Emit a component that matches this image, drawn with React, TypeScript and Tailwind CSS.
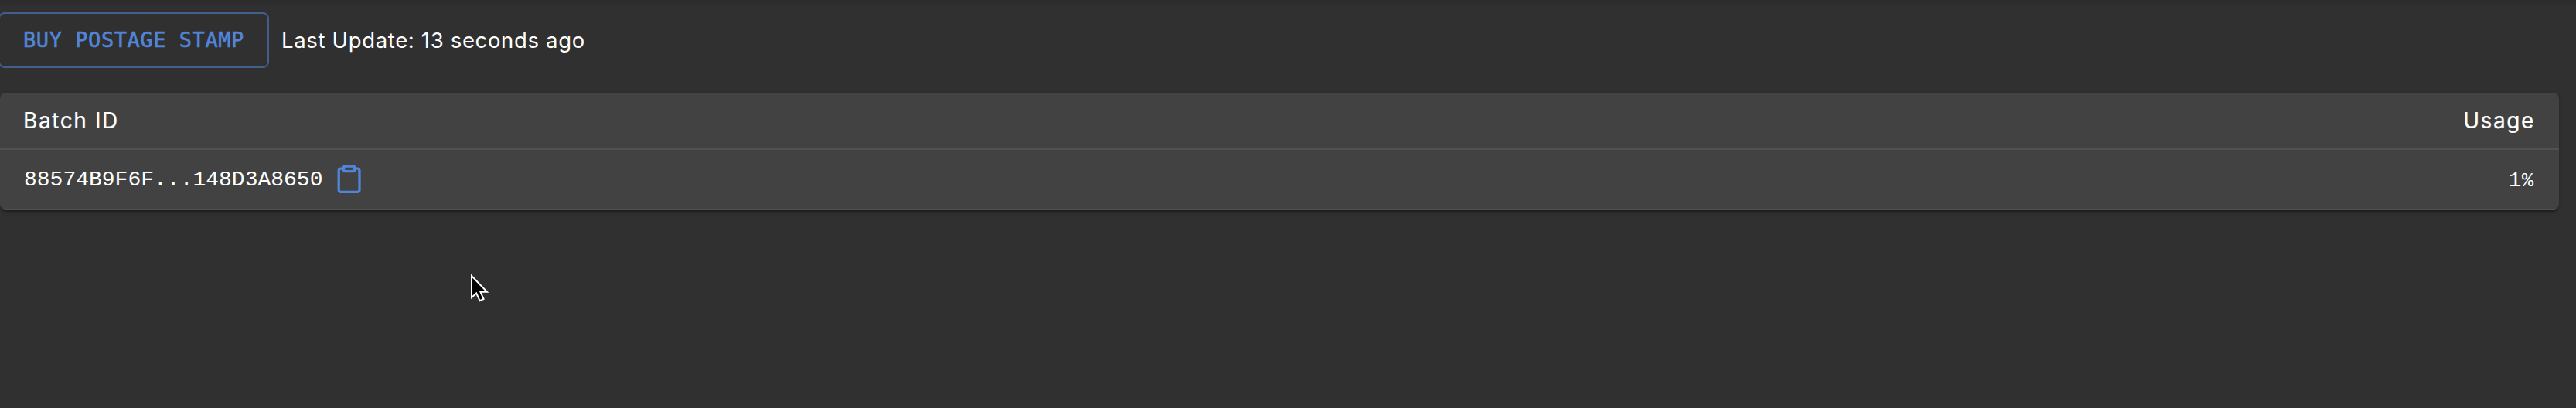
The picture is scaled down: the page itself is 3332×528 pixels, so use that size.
import React from "react";

function ClipboardIcon() {
  return (
    <svg className="ml-2.5 h-12 w-12 shrink-0 text-[#5285d9]" viewBox="0 0 24 24" fill="none" stroke="currentColor" strokeWidth="1.65" strokeLinecap="round" strokeLinejoin="round">
      <path d="M15.9 5.1h1.8a1.3 1.3 0 0 1 1.3 1.3v12.5a1.3 1.3 0 0 1-1.3 1.3h-10.8a1.3 1.3 0 0 1-1.3-1.3v-12.5a1.3 1.3 0 0 1 1.3-1.3h1.8" />
      <rect x="8.8" y="3.6" width="7" height="3.2" rx="0.8" />
    </svg>
  );
}

export default function App() {
  return (
    <main className="relative h-[528px] w-[3332px] overflow-hidden bg-[#303030] bg-[linear-gradient(to_bottom,#2b2b2b,#303030_8px)] pt-4 font-['Inter',sans-serif] text-white">
      <div className="flex h-[72px] items-center">
        <button className="-ml-0.5 box-border h-[72px] w-[350px] rounded-lg border-2 border-[#415e8d] pl-[30px] text-left font-['DejaVu_Sans_Mono',monospace] text-[27px] leading-[48px] tracking-[0.56px] whitespace-nowrap text-[#5285d9] [-webkit-text-stroke:0.6px_#5285d9]">
          BUY POSTAGE STAMP
        </button>
        <p className="ml-4 text-[27.5px] leading-10 tracking-[0.66px] whitespace-nowrap">Last Update: 13 seconds ago</p>
      </div>
      <section className="mt-8 flex h-[152px] w-[3310px] flex-col overflow-hidden rounded-lg bg-[#424242] shadow-[0_4px_2px_-2px_rgba(0,0,0,0.2),0_2px_2px_0_rgba(0,0,0,0.14),0_2px_6px_0_rgba(0,0,0,0.12)]">
        <header className="flex h-[74px] items-center justify-between border-b-2 border-[#515151] pr-[31px] pl-[30px] text-[28px] font-normal tracking-[1.6px] [-webkit-text-stroke:0.2px_#fff]">
          <span>Batch ID</span>
          <span>Usage</span>
        </header>
        <div className="flex h-[78px] items-center justify-between border-b-2 border-[#515151] pr-8 pl-[31px] font-['Liberation_Mono',monospace] text-[28px]">
          <div className="flex items-center">
            <span className="pt-0.5">88574B9F6F...148D3A8650</span>
            <ClipboardIcon />
          </div>
          <span className="pt-1">
            1<span className="inline-block w-[16.8px] text-center text-[25px]">%</span>
          </span>
        </div>
      </section>
      <svg className="absolute top-[352px] left-[606px] h-10 w-8" viewBox="0 0 32 40">
        <path d="M4 5V33l6.2-5.6 4.4 9.8 5-2.2-4.2-9.2H24Z" fill="#000" stroke="#fff" strokeWidth="2" />
      </svg>
    </main>
  );
}
